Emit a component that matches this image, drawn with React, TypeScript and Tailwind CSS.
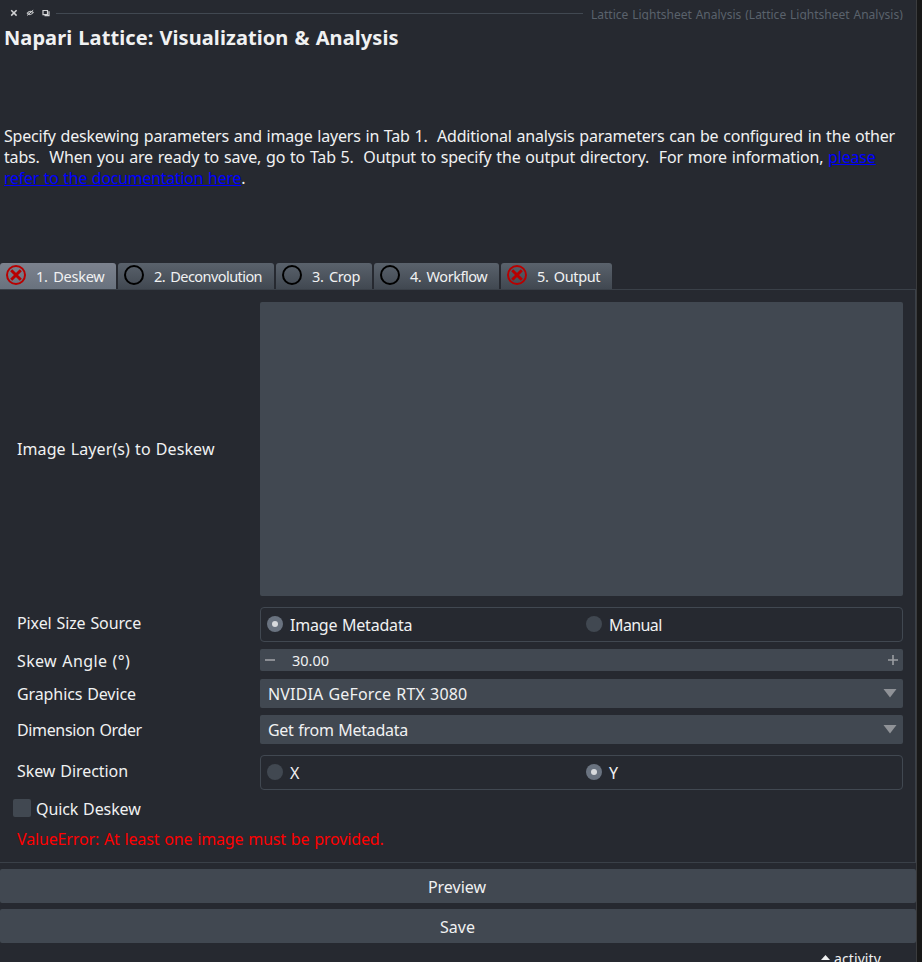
import type { ReactNode } from 'react';

type TabState = 'error' | 'empty';

function StateIcon({ state }: { state: TabState }) {
  return state === 'error' ? (
    <svg width="20" height="20" viewBox="0 0 20 20" fill="none" stroke="#b80000" className="shrink-0">
      <circle cx="10" cy="10" r="9" strokeWidth="2" />
      <path d="M5.2 5.2 14.8 14.8M14.8 5.2 5.2 14.8" strokeWidth="3" />
    </svg>
  ) : (
    <svg width="20" height="20" viewBox="0 0 20 20" fill="none" stroke="#000" className="shrink-0">
      <circle cx="10" cy="10" r="9" strokeWidth="2" />
    </svg>
  );
}

function Tab({ state, label, size, active }: { state: TabState; label: string; size: string; active?: boolean }) {
  return (
    <div
      className={`flex h-[26px] shrink-0 items-start rounded-t-[3px] bg-linear-to-b pl-[6px] pt-[2px] ${size} ${
        active ? 'from-[#7c828e] to-[#69727e]' : 'from-[#5a626c] to-[#414851]'
      }`}
    >
      <StateIcon state={state} />
      <span className="ml-[10px] text-[14.5px] leading-[23px] [word-spacing:2px]">{label}</span>
    </div>
  );
}

function Radio({ on }: { on?: boolean }) {
  return (
    <span
      className={`flex size-4 shrink-0 items-center justify-center rounded-full ${on ? 'bg-[#6a7380]' : 'bg-[#414851]'}`}
    >
      {on && <span className="size-[6px] rounded-full bg-[#d8dadd]" />}
    </span>
  );
}

function RadioGroup({ options, selected }: { options: { text: string; spacing: string }[]; selected: number }) {
  return (
    <div className="grid h-[35px] grid-cols-[319px_1fr] rounded-[4px] border border-[#414851] pl-[6px]">
      {options.map((o, i) => (
        <div key={o.text} className="flex items-center">
          <span className="mb-px">
            <Radio on={i === selected} />
          </span>
          <span className={`ml-[7px] mt-[2px] ${o.spacing}`}>{o.text}</span>
        </div>
      ))}
    </div>
  );
}

function Combo({ spacing, children }: { spacing: string; children: ReactNode }) {
  return (
    <div className="flex h-[29px] items-center justify-between rounded-[2px] bg-[#414851] pl-[8px] pr-[6px]">
      <span className={`mt-[2px] ${spacing}`}>{children}</span>
      <svg width="14" height="9" viewBox="0 0 14 9">
        <path d="M.5 0h13L7 8.5z" fill="#8f9297" />
      </svg>
    </div>
  );
}

function Row({ label, className, labelClass, children }: { label: string; className: string; labelClass: string; children: ReactNode }) {
  return (
    <div className={`grid grid-cols-[243px_643px] items-center ${className}`}>
      <span className={labelClass}>{label}</span>
      {children}
    </div>
  );
}

export default function App() {
  return (
    <div className="flex h-[962px] w-[922px] overflow-hidden bg-[#181818] font-['Noto_Sans',sans-serif] text-[16px] leading-[21px] text-[#f0f1f2]">
      <div className="flex w-[917px] shrink-0 flex-col border-r border-[#3b3c3e] bg-[#262930] whitespace-pre [word-spacing:0.8px]">
        <div className="flex h-[20px] items-start overflow-hidden">
          <svg width="56" height="20" viewBox="0 0 56 20" fill="none" stroke="#d2d3d5" className="shrink-0">
            <path d="m11.2 10.2 5.4 5.4m0-5.4-5.4 5.4" strokeWidth="1.5" />
            <path d="M27 13.3q3-3.2 6.2-.8-2.7 3.6-6.2.8" strokeWidth="1.2" stroke="#b4b6b9" />
            <path d="m27.2 15.4 6-5.2" strokeWidth="1" />
            <path d="M43 10.5h4.5v4.2H43z" strokeWidth="1.2" />
            <path d="M44.5 15.7h4.5v-4.4" strokeWidth="1.2" />
          </svg>
          <div className="mt-[13px] h-px w-[527px] bg-[#414851]" />
          <span className="ml-[8px] mt-[5px] text-[12px] leading-[20px] tracking-[0px] text-[#5a626c]">
            Lattice Lightsheet Analysis (Lattice Lightsheet Analysis)
          </span>
        </div>

        <h1 className="mt-[5px] pl-[4px] text-[20px] font-bold leading-[26px] tracking-[0.08px]">Napari Lattice: Visualization &amp; Analysis</h1>

        <div className="mt-[75px] h-[63px] pl-[4px]">
          <div className="tracking-[-0.195px]">Specify deskewing parameters and image layers in Tab 1.  Additional analysis parameters can be configured in the other</div>
          <div className="tracking-[-0.165px]">
            tabs.  When you are ready to save, go to Tab 5.  Output to specify the output directory.  For more information,{' '}
            <a className="text-[#0000ff] underline">please</a>
          </div>
          <div className="tracking-[-0.28px]">
            <a className="text-[#0000ff] underline">refer to the documentation here</a>.
          </div>
        </div>

        <div className="mt-[74px] flex gap-[2px]">
          <Tab state="error" label="1. Deskew" size="w-[116px] tracking-[-0.25px]" active />
          <Tab state="empty" label="2. Deconvolution" size="w-[156px] tracking-[-0.56px]" />
          <Tab state="empty" label="3. Crop" size="w-[96px] tracking-[-0.35px]" />
          <Tab state="empty" label="4. Workflow" size="w-[125px] tracking-[-0.45px]" />
          <Tab state="error" label="5. Output" size="w-[111px] tracking-[-0.38px]" />
        </div>

        <div className="h-[574px] w-[916px] shrink-0 border-y border-r border-[#3a4048] pl-[17px] pt-[12px]">
          <Row label="Image Layer(s) to Deskew" className="h-[294px]" labelClass="tracking-[0.1px]">
            <div className="h-full rounded-[2px] bg-[#414851]" />
          </Row>
          <Row label="Pixel Size Source" className="mt-[11px]" labelClass="mb-[2px] tracking-[-0.1px]">
            <RadioGroup
              options={[
                { text: 'Image Metadata', spacing: 'tracking-[-0.2px]' },
                { text: 'Manual', spacing: 'tracking-[-0.6px]' },
              ]}
              selected={0}
            />
          </Row>
          <Row label="Skew Angle (°)" className="mt-[7px] h-[22px]" labelClass="mt-[2px] leading-[18px] tracking-[0.36px]">
            <div className="flex h-[22px] items-center rounded-[2px] bg-[#414851] pl-[5px] pr-[5px] text-[14.5px]">
              <span className="h-[2px] w-[10px] bg-[#8a8d93]" />
              <span className="ml-[17px]">30.00</span>
              <svg width="10" height="10" viewBox="0 0 10 10" className="ml-auto" stroke="#9a9da1" strokeWidth="1.6">
                <path d="M5 0v10M0 5h10" />
              </svg>
            </div>
          </Row>
          <Row label="Graphics Device" className="mt-[8px]" labelClass="mt-[2px] tracking-[-0.1px]">
            <Combo spacing="tracking-[0.15px]">NVIDIA GeForce RTX 3080</Combo>
          </Row>
          <Row label="Dimension Order" className="mt-[7px]" labelClass="mt-[2px] tracking-[-0.36px]">
            <Combo spacing="tracking-[-0.28px]">Get from Metadata</Combo>
          </Row>
          <Row label="Skew Direction" className="mt-[11px]" labelClass="mb-[2px] tracking-[-0.06px]">
            <RadioGroup
              options={[
                { text: 'X', spacing: '' },
                { text: 'Y', spacing: '' },
              ]}
              selected={1}
            />
          </Row>
          <div className="ml-[-4px] mt-[9px] flex h-[18px] items-center">
            <span className="size-[18px] rounded-[2px] bg-[#414851]" />
            <span className="ml-[5px] mt-[2px] tracking-[-0.1px]">Quick Deskew</span>
          </div>
          <div className="mt-[12px] tracking-[-0.14px] text-[#ff0000]">ValueError: At least one image must be provided.</div>
        </div>

        <button className="mt-[6px] h-[34px] w-[916px] shrink-0 rounded-[2px] bg-[#414851] pr-[2px] pt-[2px]">Preview</button>
        <button className="mt-[6px] h-[34px] w-[916px] shrink-0 rounded-[2px] bg-[#414851] pr-px pt-[2px]">Save</button>

        <div className="mt-[6px] flex h-[13px] items-start overflow-hidden pl-[821px]">
          <svg width="9" height="5" viewBox="0 0 9 5" className="mt-[6px] shrink-0">
            <path d="M0 5 4.5 0 9 5z" fill="#f0f1f2" />
          </svg>
          <span className="ml-[4px] text-[14px] leading-[20px] tracking-[0.1px]">activity</span>
        </div>
      </div>
    </div>
  );
}
